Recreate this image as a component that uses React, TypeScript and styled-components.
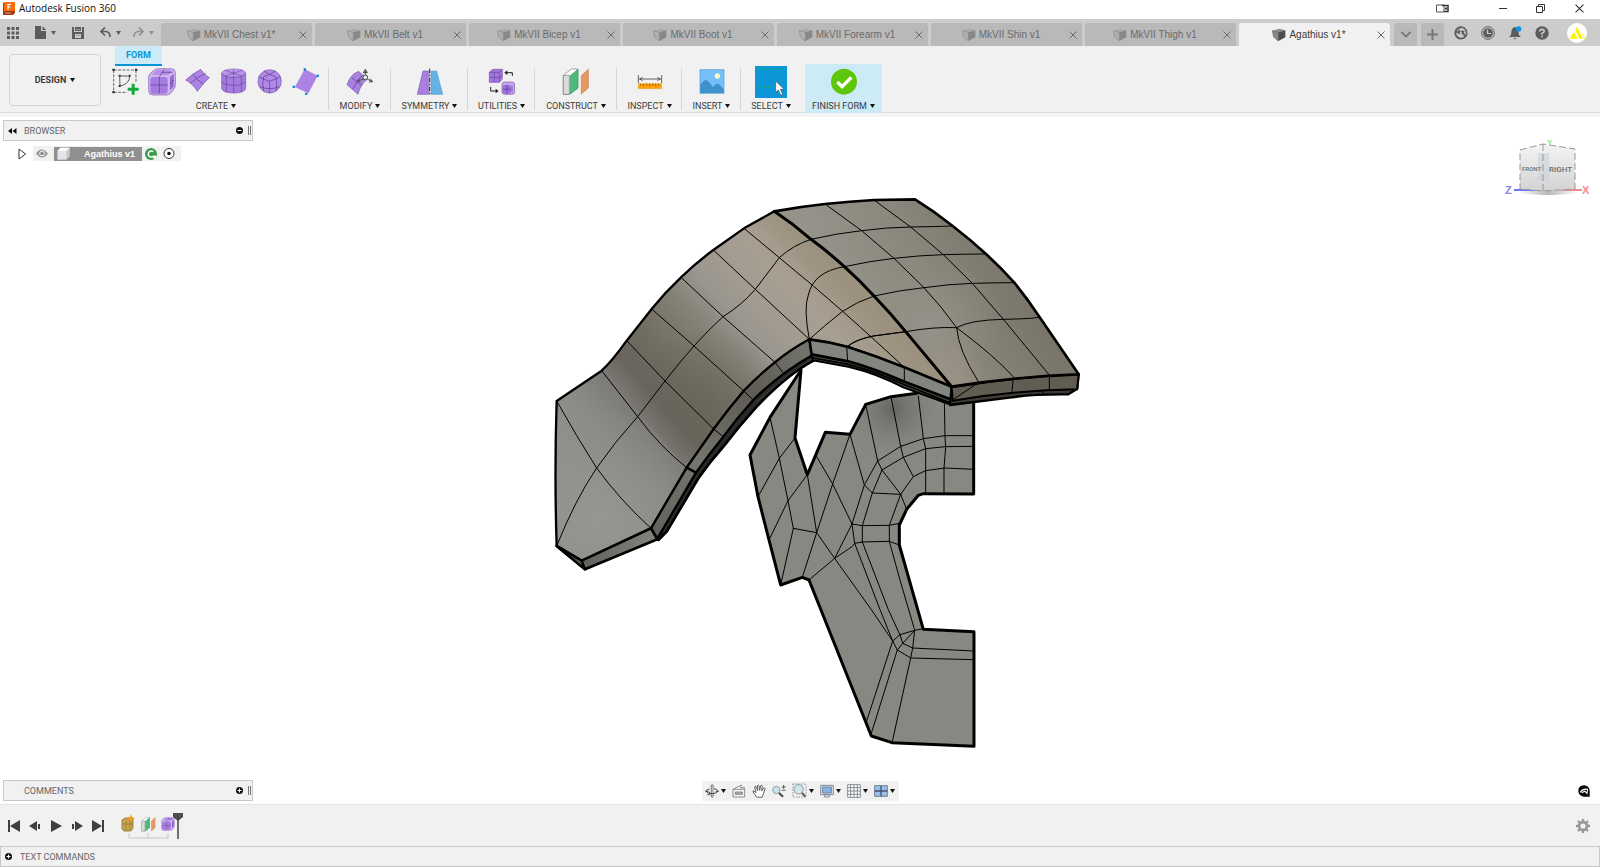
import React from "react";
import styled, { createGlobalStyle } from "styled-components";

const sans = `"Liberation Sans", Arial, sans-serif`;
const label = `Roboto, "Liberation Sans", sans-serif`;

const GlobalStyle = createGlobalStyle`
  * { box-sizing: border-box; }
  body { margin: 0; font-family: ${label}; font-size: 9px; color: #3c3c3c; background: #fff; }
  button { font: inherit; color: inherit; background: none; border: 0; padding: 0; margin: 0; display: inline-flex; align-items: center; justify-content: center; cursor: pointer; }
  svg { display: block; flex: none; }
`;

const Page = styled.div`
  min-height: 100vh;
  display: flex;
  flex-direction: column;
`;

/* ---------- title bar ---------- */
const TitleBar = styled.header`
  height: 19px;
  display: flex;
  align-items: center;
  padding: 0 16px 2px 3px;
  gap: 4px;
  background: #fff;
`;
const AppTitle = styled.h1`
  margin: 0;
  flex: 1;
  font: 400 10px "Open Sans", "Noto Sans", sans-serif;
  line-height: 17px;
  color: #111;
`;
const WindowButton = styled.button<{ $after: number }>`
  height: 16px;
  margin-right: ${(p) => p.$after}px;
`;

/* ---------- document tabs ---------- */
const TabStrip = styled.div`
  height: 27px;
  display: flex;
  align-items: stretch;
  background: #ccc;
  color: #666;
`;
const QuickBar = styled.div`
  width: 161px;
  padding-left: 7px;
  display: flex;
  align-items: center;
`;
const QuickButton = styled.button<{ $after: number; $dim?: boolean }>`
  gap: 5px;
  height: 20px;
  margin-right: ${(p) => p.$after}px;
  color: ${(p) => (p.$dim ? "#929292" : "#5c5c5c")};
`;
const Tabs = styled.nav`
  flex: 1;
  min-width: 0;
  display: flex;
  gap: 3px;
  padding-top: 4px;
`;
const Tab = styled.div<{ $active?: boolean }>`
  flex: 1;
  min-width: 0;
  display: flex;
  align-items: center;
  padding-right: 3px;
  border-radius: 3px 3px 0 0;
  background: ${(p) => (p.$active ? "#f1f1f1" : "#b9b9b9")};
  color: ${(p) => (p.$active ? "#3c3c3c" : "#6a6a6a")};
`;
const TabName = styled.button`
  flex: 1;
  min-width: 0;
  gap: 3px;
  padding-left: 4px;
  height: 22px;
  font-family: ${sans};
  font-size: 10px;
  line-height: 22px;
  white-space: nowrap;
`;
const SmallButton = styled.button`
  width: 12px;
  height: 16px;
`;
const StripButton = styled.button`
  width: 23px;
  margin: 4px 0 0 4px;
  border-radius: 3px 3px 0 0;
  background: #b9b9b9;
  color: #777;
`;
const Account = styled.div`
  width: 156px;
  padding-left: 11px;
  display: flex;
  align-items: center;
  gap: 15px;
  color: #5c5c5c;
`;
const Avatar = styled.button`
  width: 20px;
  height: 20px;
  margin-left: 4px;
  border-radius: 50%;
  background: #fff;
`;

/* ---------- ribbon ---------- */
const Ribbon = styled.section`
  height: 71px;
  display: flex;
  align-items: flex-start;
  background: #f1f1f1;
  border-bottom: 4px solid #f4f4f4;
  box-shadow: inset 0 -1px 0 #dcdcdc;
`;
const Workspace = styled.button`
  width: 92px;
  height: 52px;
  margin: 8px 2px 0 9px;
  gap: 4px;
  border: 1px solid #d4d4d4;
  border-radius: 4px;
  font-weight: 700;
`;
const RibbonBody = styled.div`
  display: flex;
  flex-direction: column;
`;
const RibbonTabs = styled.div`
  height: 18px;
  padding-left: 12px;
`;
const RibbonTab = styled.button`
  width: 47px;
  height: 20px;
  border-bottom: 2px solid #0696d7;
  background: #cdeaf7;
  color: #0696d7;
  font-weight: 700;
`;
const Groups = styled.div`
  display: flex;
`;
const Group = styled.div<{ $width: number; $plain?: boolean; $lit?: boolean }>`
  width: ${(p) => p.$width}px;
  height: 49px;
  margin-left: ${(p) => (p.$lit ? 4 : 0)}px;
  display: flex;
  flex-direction: column;
  background: ${(p) =>
    p.$lit
      ? "#cdeaf7"
      : p.$plain
        ? "none"
        : "linear-gradient(#d6d6d6, #d6d6d6) right 4px / 1px 42px no-repeat"};
`;
const Tools = styled.div`
  height: 34px;
  display: flex;
  align-items: center;
  justify-content: center;
  gap: 8px;
  padding-top: 1px;
`;
const Tool = styled.button<{ $on?: boolean }>`
  width: ${(p) => (p.$on ? 32 : 28)}px;
  height: ${(p) => (p.$on ? 32 : 28)}px;
  background: ${(p) => (p.$on ? "#0a96d8" : "none")};
`;
const GroupName = styled.button`
  height: 15px;
  gap: 3px;
  white-space: nowrap;
`;

/* ---------- canvas ---------- */
const Canvas = styled.main`
  position: relative;
  flex: 1;
  min-height: 480px;
  display: flex;
  flex-direction: column;
  justify-content: space-between;
  background: #fff;
`;
const Scene = styled.svg`
  position: absolute;
  inset: 0;
  width: 100%;
  height: 100%;
`;
const CanvasTop = styled.div`
  position: relative;
  display: flex;
  justify-content: space-between;
  padding: 3px 9px 0 3px;
`;
const CanvasBottom = styled.div`
  position: relative;
  display: grid;
  grid-template-columns: 1fr auto 1fr;
  align-items: center;
  padding: 0 3px 3px;
`;
const CubeHolder = styled.div`
  padding-top: 18px;
`;
const PanelBar = styled.div`
  width: 250px;
  height: 21px;
  display: flex;
  align-items: center;
  padding: 0 1px 0 4px;
  border: 1px solid #c8c8c8;
  background: #f1f1f1;
  color: #666;
`;
const PanelLead = styled.span`
  width: 16px;
  display: flex;
`;
const PanelTitle = styled.h2`
  flex: 1;
  margin: 0;
  font-size: 9px;
  font-weight: 400;
`;
const Grip = styled.span`
  width: 3px;
  height: 9px;
  margin-left: 5px;
  border: solid #777;
  border-width: 0 1px;
`;
const Tree = styled.div`
  display: flex;
  align-items: center;
  margin: 5px 0 0 15px;
  height: 15px;
`;
const TreeItem = styled.div`
  display: flex;
  align-items: center;
  height: 15px;
  margin-left: 6px;
  padding: 0 6px 0 3px;
  background: #f1f1f1;
`;
const TreeName = styled.button`
  width: 88px;
  height: 14px;
  margin: 0 3px 0 6px;
  padding: 0 7px 0 3px;
  justify-content: space-between;
  background: #909090;
  color: #fff;
  font: 700 9px ${sans};
`;
const NavBar = styled.div`
  width: 197px;
  height: 20px;
  display: flex;
  align-items: center;
  justify-content: space-between;
  padding: 0 4px 0 3px;
  background: #f1f1f1;
`;
const NavButton = styled.button`
  gap: 2px;
  height: 18px;
`;
const Badge = styled.button`
  justify-self: end;
  margin-right: 7px;
`;

/* ---------- timeline and command line ---------- */
const Timeline = styled.footer`
  height: 42px;
  display: flex;
  align-items: center;
  padding: 0 10px 0 8px;
  background: #f1f1f1;
  border-top: 1px solid #e6e6e6;
`;
const Playback = styled.div`
  display: flex;
  gap: 7px;
  width: 112px;
  color: #3f3f3f;
`;
const Features = styled.div`
  flex: 1;
`;
const CommandBar = styled.section`
  height: 21px;
  display: flex;
  align-items: center;
  gap: 8px;
  padding-left: 4px;
  border: 1px solid #c8c8c8;
  background: #f1f1f1;
  color: #666;
`;

/* ---------- icons ---------- */
const Caret = ({ fill = "currentColor" }: { fill?: string }) => (
  <svg width="5" height="4" viewBox="0 0 5 4"><path d="M0 0h5L2.500 4z" fill={fill} /></svg>
);
const Cross = ({ size = 8, color = "#6a6a6a" }) => (
  <svg width={size} height={size} viewBox="0 0 8 8"><path d="M.5.5l7 7M7.500 .5l-7 7" stroke={color} fill="none" /></svg>
);
const DocCube = ({ active }: { active?: boolean }) => (
  <svg width="14" height="14" viewBox="0 0 42 42">
    <path d="M1 8L22 2 40 7 19 13z" fill={active ? "#8c8c8c" : "#aaa"} />
    <path d="M1 8l18 5v26L5 27z" fill={active ? "#8a8a8a" : "#b0b0b0"} stroke={active ? "#666" : "#8b8b8b"} strokeWidth="2" />
    <path d="M19 13L40 7v21L19 39z" fill={active ? "#4d4d4d" : "#888"} />
  </svg>
);
const Plus = () => (
  <svg width="7" height="7" viewBox="0 0 7 7"><circle cx="3.500" cy="3.500" r="3.500" fill="#111" /><path d="M1.500 3.500h4M3.500 1.500v4" stroke="#fff" /></svg>
);

const SketchIcon = () => (
  <svg width="28" height="28" viewBox="0 0 84 84">
    <path d="M5 6H72M5 6V73M5 73H45M72 6V44" stroke="#4a4a4a" strokeWidth="2.500" strokeDasharray="9 4" fill="none" />
    <g fill="#333"><path d="M1 2h7v7H1zM69 2h7v7h-7zM1 69h7v7H1z" /><path d="M20 20h6v6h-6zM50 20h6v6h-6zM20 51h6v6h-6z" /></g>
    <path d="M23 24H53Q53 48 24 54Z" stroke="#444" strokeWidth="2.500" fill="none" />
    <path d="M59 47h9v12h12v9H68v12h-9V68H47v-9h12z" fill="#14a83c" />
  </svg>
);
const BoxIcon = ({ size = 28 }: { size?: number }) => (
  <svg width={size} height={size} viewBox="0 0 84 84">
    <path d="M2 25Q3 18 20 5Q24 2 32 2H70Q82 3 82 14V52Q82 58 72 72Q64 81 56 81H14Q2 80 2 68Z" fill="#cfb4f2" stroke="#7b57ac" strokeWidth="2" />
    <path d="M13 18L26 6H66L74 12 60 21H20Z" fill="#b48ee8" />
    <rect x="7" y="27" width="52" height="50" rx="9" fill="#a67be0" />
    <path d="M66 28L77 17V55L66 68Z" fill="#9468d2" />
    <path d="M34 27V77M7 51H59M34 27L49 4M66 48L78 36M42 13H74" stroke="#593987" strokeWidth="2" fill="none" />
  </svg>
);
const FaceIcon = () => (
  <svg width="28" height="28" viewBox="0 0 84 84">
    <path d="M5 36Q28 15 50 4Q61 21 76 29Q58 45 40 70Q26 46 5 36Z" fill="#ac82e4" stroke="#7b57ac" strokeWidth="2" />
    <path d="M27 19Q42 40 58 48M18 46Q40 27 65 16" stroke="#593987" strokeWidth="2" fill="none" />
  </svg>
);
const CylinderIcon = () => (
  <svg width="28" height="28" viewBox="0 0 84 84">
    <path d="M5 15Q10 3 41 3T77 15V62Q72 75 41 75T5 62Z" fill="#a57bdf" stroke="#7b57ac" strokeWidth="2" />
    <path d="M5 15Q10 3 41 3T77 15Q71 28 41 28T5 15Z" fill="#b996eb" />
    <path d="M5 15Q11 28 41 28T77 15M5 40Q11 52 41 52T77 40M41 28V75M19 26V72M64 26V72M14 7L67 24M67 7L15 24M41 3V28" stroke="#593987" strokeWidth="1.500" fill="none" />
  </svg>
);
const SphereIcon = () => (
  <svg width="28" height="28" viewBox="0 0 84 84">
    <circle cx="41" cy="40" r="35" fill="#b188e8" stroke="#7b57ac" strokeWidth="2" />
    <path d="M8 26Q22 34 40 40Q58 34 74 26M40 40Q42 58 41 76M12 56Q25 62 41 62T71 56M24 9Q34 18 60 27Q64 45 60 70M59 9Q46 18 22 27Q18 50 24 71" stroke="#593987" strokeWidth="2" fill="none" />
  </svg>
);
const PlaneIcon = () => (
  <svg width="28" height="28" viewBox="0 0 84 84">
    <path d="M38 4L77 23 49 76 9 57Z" fill="#ac82e4" stroke="#a5a5a5" strokeWidth="1" strokeDasharray="4 4" />
    <g fill="#1483e0"><path d="M35 1h7v7h-7zM74 20h7v7h-7zM2 53h7v7H2zM39 74h7v7h-7z" /></g>
  </svg>
);
const ModifyIcon = () => (
  <svg width="28" height="28" viewBox="0 0 84 84">
    <path d="M3 50Q14 18 38 10L64 34Q44 48 36 79Z" fill="#a981e1" stroke="#7b57ac" strokeWidth="2" />
    <path d="M18 30L48 53M21 63Q31 37 50 21" stroke="#593987" strokeWidth="2" fill="none" />
    <path d="M58 8V26M52 14L58 4 64 14ZM52 34L37 38M42 32L34 40 44 42M65 34L78 40M72 32L80 41 69 42" stroke="#444" strokeWidth="3" fill="#eee" />
    <circle cx="58" cy="28" r="7" fill="#f1f1f1" stroke="#444" strokeWidth="3" />
  </svg>
);
const SymmetryIcon = () => (
  <svg width="28" height="28" viewBox="0 0 84 84">
    <path d="M21 9H37V79H4Z" fill="#ac7de2" stroke="#7e5ab0" strokeWidth="2" />
    <path d="M45 9H62L80 79H45Z" fill="#65b3e5" stroke="#559fd2" strokeWidth="2" />
    <path d="M41 2V83" stroke="#222" strokeWidth="3" strokeDasharray="14 4 5 4" />
  </svg>
);
const UtilitiesIcon = () => (
  <svg width="28" height="28" viewBox="0 0 84 84">
    <path d="M4 13L14 4H43V33L34 43H4Z" fill="#a175dd" stroke="#7b57ac" strokeWidth="2" />
    <path d="M4 13H34V43M34 13L43 4M19 13V43M4 28H34L43 20" stroke="#593987" strokeWidth="1.500" fill="none" />
    <rect x="42" y="42" width="38" height="37" rx="8" fill="#c7a9f1" stroke="#7b57ac" strokeWidth="2" />
    <rect x="44" y="51" width="25" height="26" rx="6" fill="#9d70db" />
    <path d="M57 51V77M44 64H69M72 52V73" stroke="#593987" strokeWidth="2" />
    <path d="M73 24V14H56M8 57V69H25" stroke="#222" strokeWidth="3" fill="none" />
    <path d="M58 7V21L49 14ZM23 62V76L32 69Z" fill="#222" />
  </svg>
);
const ConstructIcon = ({ size = 28 }: { size?: number }) => (
  <svg width={size} height={size} viewBox="0 0 84 84">
    <path d="M4 22L28 3H47V60L21 79H4Z" fill="#fff" stroke="#777" strokeWidth="2" />
    <path d="M4 22H22V79H4Z" fill="#dcdcdc" stroke="#777" strokeWidth="2" />
    <path d="M25 23L48 4V60L25 78Z" fill="#4cba78" stroke="#31945a" strokeWidth="2" />
    <path d="M58 23L79 4V60L58 78Z" fill="#e59a63" stroke="#c67c44" strokeWidth="2" />
  </svg>
);
const InspectIcon = () => (
  <svg width="28" height="28" viewBox="0 0 84 84">
    <path d="M7 21V45M77 21V45M10 33H74M20 28L11 33 20 38M64 28L73 33 64 38" stroke="#444" strokeWidth="2.500" fill="none" />
    <path d="M7 47H77V62H7Z" fill="#ffa20d" stroke="#d98200" strokeWidth="1" />
    <path d="M14 47v6M23 47v8M32 47v6M41 47v8M50 47v6M59 47v8M68 47v6" stroke="#6f4400" strokeWidth="2" />
  </svg>
);
const InsertIcon = () => (
  <svg width="28" height="28" viewBox="0 0 84 84">
    <path d="M6 5H78V76H6Z" fill="#74bff8" stroke="#4b98cf" strokeWidth="2" />
    <path d="M7 50Q18 34 26 36Q38 44 44 58Q54 44 62 48Q72 58 77 64V75H7Z" fill="#3d92cb" />
    <circle cx="58" cy="24" r="8" fill="#fbf8cf" />
  </svg>
);
const SelectIcon = () => (
  <svg width="32" height="32" viewBox="0 0 96 96">
    <path d="M8 9H79V62H8Z" fill="none" stroke="#1fae66" strokeWidth="2.500" strokeDasharray="8 4" />
    <path d="M62 45V79L70 72 77 88 83 85 76 70H87Z" fill="#fff" stroke="#555" strokeWidth="2" />
  </svg>
);
const FinishIcon = () => (
  <svg width="28" height="28" viewBox="0 0 84 84">
    <circle cx="42" cy="41" r="39" fill="#5fc70a" />
    <path d="M22 42L36 56 64 28" stroke="#fff" strokeWidth="10" fill="none" />
  </svg>
);

const QuickGrid = () => (
  <svg width="12" height="12" viewBox="0 0 12 12">
    {[0, 4.5, 9].map((y) => [0, 4.5, 9].map((x) => <rect key={`${x}-${y}`} x={x} y={y} width="3" height="3" fill="currentColor" />))}
  </svg>
);
const QuickFile = () => (
  <svg width="11" height="13" viewBox="0 0 11 13"><path d="M0 0h6v5h5v8H0zM7.500 0L11 4H7.500z" fill="currentColor" /></svg>
);
const QuickSave = () => (
  <svg width="12" height="12" viewBox="0 0 12 12"><path d="M0 0h2v5h8V0h2v12H0zM3 0h6v4H3zM3 7v4h6V7z" fill="currentColor" fillRule="evenodd" /><path d="M4 8h4v1H4zM4 2.500h4" fill="currentColor" stroke="#ccc" strokeWidth=".6" /></svg>
);
const QuickUndo = ({ redo }: { redo?: boolean }) => (
  <svg width="11" height="11" viewBox="0 0 11 11">
    <g transform={redo ? "translate(11 0) scale(-1 1)" : undefined}>
      <path d="M5 .5L1 4.500 5 8.500M1 4.500h4.500Q10 4.500 10 10" fill="none" stroke="currentColor" strokeWidth="1.700" />
    </g>
  </svg>
);

/* ---------- 3D model ---------- */
const Model = () => (
  <Scene viewBox="0 117 1600 687" preserveAspectRatio="xMidYMid meet" role="img" aria-label="Helmet half with cheek guard">
    <defs>
      <linearGradient id="dome" gradientUnits="userSpaceOnUse" x1="-2" y1="754" x2="748" y2="94">
        <stop offset="0" stopColor="#94938f" />
        <stop offset=".17" stopColor="#8b8a87" />
        <stop offset=".27" stopColor="#7e7c78" />
        <stop offset=".35" stopColor="#69655d" />
        <stop offset=".43" stopColor="#6e6a5f" />
        <stop offset=".53" stopColor="#7b776b" />
        <stop offset=".61" stopColor="#88847a" />
        <stop offset=".68" stopColor="#99958e" />
        <stop offset=".76" stopColor="#a19b90" />
        <stop offset=".88" stopColor="#a89f92" />
        <stop offset="1" stopColor="#9f9583" />
      </linearGradient>
      <linearGradient id="seamTone" gradientUnits="userSpaceOnUse" x1="840" y1="310" x2="910" y2="245">
        <stop offset="0" stopColor="#9a907d" stopOpacity="0" />
        <stop offset="1" stopColor="#9a907d" stopOpacity=".9" />
      </linearGradient>
      <radialGradient id="frontTone" gradientUnits="userSpaceOnUse" cx="170" cy="980" r="330">
        <stop offset="0" stopColor="#979692" />
        <stop offset="1" stopColor="#8c8b88" stopOpacity="0" />
      </radialGradient>
      <radialGradient id="domeShade" gradientUnits="userSpaceOnUse" cx="500" cy="650" r="240">
        <stop offset="0" stopColor="#666155" stopOpacity=".6" />
        <stop offset="1" stopColor="#66625a" stopOpacity="0" />
      </radialGradient>
      <linearGradient id="crown" gradientUnits="userSpaceOnUse" x1="260" y1="440" x2="700" y2="230">
        <stop offset="0" stopColor="#96938a" />
        <stop offset=".5" stopColor="#8b877d" />
        <stop offset="1" stopColor="#7b766a" />
      </linearGradient>
      <radialGradient id="crownLight" gradientUnits="userSpaceOnUse" cx="480" cy="430" r="220">
        <stop offset="0" stopColor="#97958c" stopOpacity=".8" />
        <stop offset="1" stopColor="#8f8b80" stopOpacity="0" />
      </radialGradient>
      <radialGradient id="crownCorner" gradientUnits="userSpaceOnUse" cx="520" cy="590" r="130">
        <stop offset="0" stopColor="#a0968a" stopOpacity=".8" />
        <stop offset="1" stopColor="#a0968a" stopOpacity="0" />
      </radialGradient>
      <linearGradient id="rim" gradientUnits="userSpaceOnUse" x1="350" y1="1040" x2="810" y2="480">
        <stop offset="0" stopColor="#62625c" />
        <stop offset=".35" stopColor="#74756e" />
        <stop offset=".7" stopColor="#5d5b54" />
        <stop offset="1" stopColor="#73736b" />
      </linearGradient>
      <linearGradient id="toeRim" x1="0" x2="1"><stop stopColor="#56554f" /><stop offset="1" stopColor="#84847e" /></linearGradient>
      <radialGradient id="cheekShade" gradientUnits="userSpaceOnUse" cx="490" cy="175" r="150">
        <stop offset="0" stopColor="#636562" />
        <stop offset="1" stopColor="#82857c" stopOpacity="0" />
      </radialGradient>
    </defs>
    <g transform="translate(540 190) scale(.33333)" fill="none" stroke="#000" strokeWidth="3" strokeLinejoin="round" strokeLinecap="round">
      {/* cheek guard */}
      <g transform="translate(570 480)">
        <path d="M213 60L195 264 232 374 286 247 360 253 407 163 483 140 560 130 731 140V432L580 431 565 436 530 478 508 525V585L580 838 732 845V1189L486 1178 424 1158 237 690 217 682 152 705 117 570 84 440 60 315 120 202Z" fill="#868981" stroke="none" />
        <path d="M360 253L407 163 483 140 560 130 731 140V300H420Z" fill="url(#cheekShade)" stroke="none" />
        <path d="M560 130L483 140 407 163 360 253 286 247 232 374 195 264 213 60 120 202 60 315 84 440 117 570 152 705 217 682 237 690 424 1158 486 1178 732 1189V845L580 838 508 585V525L530 478 565 436 580 431 731 432V150" strokeWidth="9" />
        <path d="M120 202L148 325 174 452 190 535 152 705M195 264L148 325 84 440M232 374L174 452 117 570M232 374L260 548 217 682M190 535L260 548 314 625 424 779 488 873M360 253L308 402 260 548M259 318L308 402 366 522 374 580M237 690L314 625 366 590 374 580 397 576 478 574 508 585M314 625L366 522 403 405 443 333 512 289 580 266 645 257H731M360 253L403 405 427 429 512 433M407 163L443 333 456 360 512 433M483 140L512 289 520 322 550 380 586 362 645 354 731 358M565 138L580 266 587 296V431M643 150L645 257 647 292 642 354V430M731 289L647 290 587 296 520 322 456 360 427 429 397 527M366 522L397 527 478 526 508 520M397 527V576M478 526V574L510 690 554 840M512 433L478 526M512 433L550 380M512 433L530 478M374 580L450 779 488 873M397 576L475 779 510 855" />
      </g>
      <g transform="translate(750 1110)">
        <path d="M308 243L330 224 374 211 400 206M308 243L322 270 362 294 550 299M330 224L338 250 368 264 550 273M322 270L338 250 374 211M308 243L230 483M322 270L244 520M374 211L368 264 362 294 307 545" />
      </g>

      {/* front flap and side of the dome */}
      <path d="M50 633L185 542Q215 515 260 452L335 357Q375 307 423 262Q470 217 520 180L612 115 703 64Q760 102 813 148L913 230 1002 318 1097 425 1235 590 1093 532 922 470 808 448 705 517Q650 555 611 603L521 717 440 833 333 1015 125 1112 50 1068Q43 850 50 633Z" fill="url(#dome)" stroke="none" />
      <path d="M50 633L185 542 440 833 333 1015 125 1112 50 1068Z" fill="url(#frontTone)" stroke="none" />
      <path d="M185 542L423 262 705 517 611 603 440 833Z" fill="url(#domeShade)" stroke="none" />
      <path d="M703 64L813 148 913 230 1002 318 1097 425 1235 590 1093 532 903 365 818 286 718 203 612 115Z" fill="url(#seamTone)" stroke="none" />
      <path d="M50 633Q110 740 170 834Q240 930 333 1015M185 542L293 680Q360 770 440 833M260 452L375 573 521 717M335 357L462 468 611 603M423 262L549 380 705 517M520 180L646 298 808 448M612 115L718 203 820 288 908 364Q1010 455 1093 532" />
      <path d="M50 1068Q105 930 170 834Q225 755 293 680L375 573Q418 518 462 468Q505 420 549 380Q605 345 646 298L718 203Q760 165 813 148M808 448Q790 355 805 315Q820 245 913 230M808 448Q855 405 908 364Q950 335 1002 318M922 470Q940 450 1000 438L1097 425" />
      {/* rims */}
      <path d="M808 448Q750 480 705 517Q655 557 611 603Q565 657 521 717L440 833 333 1015 355 1050 380 1025 475 865Q510 815 550 770 600 705 650 650 740 555 820 512Z" fill="#2a2a28" strokeWidth="6" />
      <path d="M808 448Q750 480 705 517Q655 557 611 603Q565 657 521 717L440 833 333 1015 352 1046 468 848Q505 795 550 740 590 685 640 630 720 550 818 495Z" fill="url(#rim)" strokeWidth="7" />
      <path d="M440 833L468 848" strokeWidth="8" />
      <path d="M521 717L550 740M611 603L640 630M705 517L732 552" />
      <path d="M650 636Q740 555 818 506" stroke="#55534d" strokeWidth="2" />
      <path d="M50 1068L125 1112 333 1015 352 1048 135 1138Z" fill="url(#toeRim)" strokeWidth="8" />
      <path d="M50 1068L125 1112 135 1138Z" fill="#5b5a53" strokeWidth="7" />
      <path d="M50 633L185 542Q215 515 260 452L335 357Q375 307 423 262Q470 217 520 180L612 115 703 64M50 633Q43 850 50 1068" strokeWidth="7" />
      <path d="M355 1050L380 1025 475 865Q510 815 550 770 600 705 650 650 740 555 820 512" strokeWidth="8" />

      {/* crown */}
      <g transform="translate(690 -30)">
        <path d="M118 478Q175 485 232 500Q320 528 403 562L545 620V675L400 622Q320 580 235 560L128 541Z" fill="#4b4b46" strokeWidth="6" />
        <path d="M118 478Q175 485 232 500Q320 528 403 562L545 620 547 660 400 604Q310 565 235 544L125 523Z" fill="#83867f" strokeWidth="8" />
        <path d="M130 534L235 553Q320 575 400 613L540 668" strokeWidth="5" />
        <path d="M230 500L233 544M403 562V606" />
        <path d="M545 620L926 583 922 626 895 643Q790 642 725 652L540 675Z" fill="#3f3c35" strokeWidth="7" />
        <path d="M545 622Q735 590 926 583L921 628Q735 630 548 662Z" fill="#625d53" strokeWidth="6" />
        <path d="M548 660L625 608M730 593L726 634M838 585V628M820 632V643" />
        <path d="M13 94Q90 80 165 72T312 60L435 58Q495 95 548 138Q600 178 648 222Q692 262 733 308Q775 360 808 410L926 583Q735 590 545 620L407 455 312 348 223 260 123 178Z" fill="url(#crown)" stroke="none" />
        <path d="M223 260L520 200 730 400 730 592 545 620 312 348Z" fill="url(#crownLight)" stroke="none" />
        <path d="M407 455L560 443 660 600 545 620Z" fill="url(#crownCorner)" stroke="none" />
        <path d="M13 94Q90 80 165 72T312 60L435 58Q495 95 548 138Q600 178 648 222Q692 262 733 308Q775 360 808 410L926 583Q735 590 545 620" strokeWidth="8" />
        <path d="M13 94Q70 132 123 178Q175 216 223 260Q270 302 312 348Q362 400 407 455L545 620" strokeWidth="9" />
        <path d="M165 72L275 152 372 235 462 323Q515 380 560 443Q565 510 625 605M312 60L422 141 520 224 607 310 700 418 838 585M560 443Q670 525 732 592M123 178Q200 160 275 152Q350 142 422 141T548 138M223 260Q300 243 372 235Q450 226 520 224T648 222M312 348Q390 330 462 323Q540 312 607 310T733 308M407 455Q490 440 560 443Q600 420 700 418T808 411M232 500Q260 478 310 468L407 455" />
      </g>
    </g>
  </Scene>
);

const ViewCube = () => (
  <svg width="86" height="60" viewBox="0 0 86 60" fontFamily={sans}>
    <defs>
      <linearGradient id="cubeFace" x2="0" y2="1"><stop stopColor="#f4f4f4" /><stop offset="1" stopColor="#d3d3d3" /></linearGradient>
      <linearGradient id="floor"><stop stopColor="#999" stopOpacity=".1" /><stop offset=".5" stopColor="#888" /><stop offset="1" stopColor="#999" stopOpacity=".1" /></linearGradient>
    </defs>
    <ellipse cx="43" cy="54" rx="29" ry="3" fill="url(#floor)" opacity=".6" />
    <path d="M9 52H30" stroke="#6f73ee" strokeWidth="2" />
    <path d="M56 52H77" stroke="#f08a8a" strokeWidth="2" />
    <path d="M15 12L38 6V53L15 51ZM38 6L70 11V51L38 53Z" fill="url(#cubeFace)" />
    <path d="M33 15H44V43H33Z" fill="#cbd0d8" opacity=".6" />
    <path d="M15 12L38 6 70 11V51L38 53 15 51ZM38 6V53" fill="none" stroke="#999" strokeDasharray="7 3" />
    <g fill="#6c6c6c" fontFamily={label} fontWeight="500">
      <text x="17" y="33" fontSize="6">FRONT</text>
      <text x="44" y="34" fontSize="8">RIGHT</text>
    </g>
    <g fontWeight="700">
      <text x="42" y="7" fontSize="8" fill="#7df57d">Y</text>
      <text x="0" y="56" fontSize="11" fill="#8387f0">Z</text>
      <text x="77" y="56" fontSize="11" fill="#f28a8a">X</text>
    </g>
  </svg>
);

const docs = ["MkVII Chest v1*", "MkVII Belt v1", "MkVII Bicep v1", "MkVII Boot v1", "MkVII Forearm v1", "MkVII Shin v1", "MkVII Thigh v1", "Agathius v1*"];

type ToolDef = { name: string; icon: React.ReactNode };
type GroupDef = { name: string; width: number; tools: ToolDef[]; plain?: boolean; lit?: boolean; on?: boolean };
const groups: GroupDef[] = [
  {
    name: "CREATE", width: 226,
    tools: [
      { name: "Create sketch", icon: <SketchIcon /> },
      { name: "Box", icon: <BoxIcon /> },
      { name: "Face", icon: <FaceIcon /> },
      { name: "Cylinder", icon: <CylinderIcon /> },
      { name: "Sphere", icon: <SphereIcon /> },
      { name: "Plane", icon: <PlaneIcon /> },
    ],
  },
  { name: "MODIFY", width: 62, tools: [{ name: "Edit form", icon: <ModifyIcon /> }] },
  { name: "SYMMETRY", width: 77, tools: [{ name: "Mirror", icon: <SymmetryIcon /> }] },
  { name: "UTILITIES", width: 67, tools: [{ name: "Convert", icon: <UtilitiesIcon /> }] },
  { name: "CONSTRUCT", width: 82, tools: [{ name: "Offset plane", icon: <ConstructIcon /> }] },
  { name: "INSPECT", width: 65, tools: [{ name: "Measure", icon: <InspectIcon /> }] },
  { name: "INSERT", width: 59, tools: [{ name: "Insert canvas", icon: <InsertIcon /> }] },
  { name: "SELECT", width: 60, tools: [{ name: "Window selection", icon: <SelectIcon /> }], plain: true, on: true },
  { name: "FINISH FORM", width: 77, tools: [{ name: "Finish", icon: <FinishIcon /> }], lit: true },
];

const navTools: { name: string; menu?: boolean; icon: React.ReactNode }[] = [
  { name: "Orbit", menu: true, icon: <svg width="14" height="14" viewBox="0 0 42 42" fill="none" stroke="#444" strokeWidth="3"><path d="M19 6V36M24 6V36M17 8L21.500 1 26 8M17 34L21.500 41 26 34" strokeWidth="2" /><path d="M14 15Q1 18 3 22Q8 29 22 29Q38 28 39 21Q36 15 27 14M12 23L15 30 7 33M1 22H10M32 22H41" /></svg> },
  { name: "Look at", icon: <svg width="14" height="14" viewBox="0 0 42 42" fill="#f5f5f5" stroke="#777" strokeWidth="2.500"><path d="M3 16L28 3 26 12 37 10V16" /><path d="M3 16H38V39H3Z" /><path d="M10 24H31V31H10Z" fill="#a7b4c7" /></svg> },
  { name: "Pan", icon: <svg width="14" height="14" viewBox="0 0 42 42" fill="#fff" stroke="#444" strokeWidth="2.500" strokeLinejoin="round"><path d="M14 39L3 24Q2 19 6 21L12 26 8 9Q9 5 12 8L17 20 16 5Q18 1 21 5L23 19 26 5Q30 2 31 6L29 21 35 12Q39 11 39 15L33 33 30 40Z" /></svg> },
  { name: "Zoom", icon: <svg width="14" height="14" viewBox="0 0 42 42" fill="none" stroke="#444" strokeWidth="2.500"><circle cx="13" cy="18" r="11" fill="#c9e2ea" stroke="#7f929c" /><path d="M21 27L33 38" strokeWidth="6" /><path d="M35 3V15M29 9H41M29 19H41" /></svg> },
  { name: "Fit", menu: true, icon: <svg width="15" height="15" viewBox="0 0 45 45" fill="none" stroke="#555" strokeWidth="2"><path d="M3 3H42V42H3Z" strokeDasharray="4 4" /><circle cx="20" cy="19" r="14" fill="#cfe6e6" stroke="#789" strokeWidth="2.500" /><path d="M30 30L40 41" strokeWidth="6" /></svg> },
  { name: "Display settings", menu: true, icon: <svg width="14" height="14" viewBox="0 0 42 42" stroke="#6d7888" strokeWidth="2.500" fill="#dde3ea"><path d="M2 4H40V32H2Z" /><path d="M8 9H34V27H8Z" fill="#86b3ec" /><path d="M14 32H28V39H14Z" /></svg> },
  { name: "Grid and snaps", menu: true, icon: <svg width="14" height="14" viewBox="0 0 42 42" stroke="#717884" strokeWidth="2.500" fill="#fff"><path d="M2 2H40V40H2Z" /><path d="M11 2V40M21 2V40M31 2V40M2 11H40M2 21H40M2 31H40" /></svg> },
  { name: "Viewports", menu: true, icon: <svg width="14" height="12" viewBox="0 0 42 36" stroke="#5a6c86" strokeWidth="2.500" fill="#9bbfe8"><path d="M2 2H40V34H2Z" /><path d="M21 2V34M2 18H40" stroke="#42546e" strokeWidth="4" /></svg> },
];

const playback = [
  { name: "Go to start", d: "M0 0H2V12H0ZM12 0V12L2 6Z" },
  { name: "Step back", d: "M8 1V11L0 6ZM9 4H11V9H9Z" },
  { name: "Play", d: "M1 0L12 6 1 12Z" },
  { name: "Step forward", d: "M4 1V11L12 6ZM1 4H3V9H1Z" },
  { name: "Go to end", d: "M0 0L10 6 0 12ZM10 0H12V12H10Z" },
];

export default function App() {
  return (
    <Page>
      <GlobalStyle />
      <TitleBar>
        <svg width="12" height="14" viewBox="0 0 12 14">
          <path d="M0 1L2 0H12V11L10 13H0Z" fill="#a33a0b" />
          <path d="M1 0H12V9H1Z" fill="#fb6c0f" />
          <path d="M5 7.500V2.500H8M5 5H7.500" stroke="#fff" strokeWidth="1.200" fill="none" />
          <path d="M2 11h6" stroke="#d99" />
        </svg>
        <AppTitle>Autodesk Fusion 360</AppTitle>
        <WindowButton $after={46} aria-label="Switch display">
          <svg width="13" height="9" viewBox="0 0 13 9" fill="none" stroke="#334"><path d="M.5 1H8V8H.5Z" stroke="#555" /><path d="M6 1.500H12V7.500H8" strokeWidth="1.500" /><path d="M9 3.500h2v2H9z" fill="#334" stroke="none" /></svg>
        </WindowButton>
        <WindowButton $after={25} aria-label="Minimize"><svg width="8" height="9"><path d="M0 4.500H8" stroke="#333" /></svg></WindowButton>
        <WindowButton $after={26} aria-label="Restore"><svg width="9" height="9" viewBox="0 0 9 9" fill="none" stroke="#333"><path d="M.5 2.500h6v6h-6zM2.500 2.500v-2h6v6h-2" /></svg></WindowButton>
        <WindowButton $after={0} aria-label="Close"><Cross size={9} color="#333" /></WindowButton>
      </TitleBar>

      <TabStrip>
        <QuickBar>
          <QuickButton $after={16} aria-label="Data panel"><QuickGrid /></QuickButton>
          <QuickButton $after={16} aria-label="File"><QuickFile /><Caret /></QuickButton>
          <QuickButton $after={16} aria-label="Save"><QuickSave /></QuickButton>
          <QuickButton $after={12} aria-label="Undo"><QuickUndo /><Caret /></QuickButton>
          <QuickButton $after={0} $dim aria-label="Redo"><QuickUndo redo /><Caret /></QuickButton>
        </QuickBar>
        <Tabs>
          {docs.map((d, i) => {
            const active = i === docs.length - 1;
            return (
              <Tab key={d} $active={active}>
                <TabName><DocCube active={active} />{d}</TabName>
                <SmallButton aria-label={`Close ${d}`}><Cross /></SmallButton>
              </Tab>
            );
          })}
        </Tabs>
        <StripButton aria-label="All tabs"><svg width="10" height="7" viewBox="0 0 10 7"><path d="M.5 1L5 5.500 9.500 1" fill="none" stroke="currentColor" strokeWidth="1.800" /></svg></StripButton>
        <StripButton aria-label="New design"><svg width="11" height="11" viewBox="0 0 11 11"><path d="M5.500 0V11M0 5.500H11" stroke="currentColor" strokeWidth="2" /></svg></StripButton>
        <Account>
          <SmallButton aria-label="Extensions"><svg width="14" height="14" viewBox="0 0 14 14" fill="none" stroke="currentColor" strokeWidth="1.900"><path d="M8 1.300A5.700 5.700 0 1 0 12.700 7.500" /><path d="M1.500 5L5 7V3.500M8 1.300Q12.500 2 12.700 7.500M6.500 5.500h3L8.500 7.500q2.500 0 1.500 2.500" strokeWidth="1.600" /></svg></SmallButton>
          <SmallButton aria-label="Job status"><svg width="14" height="14" viewBox="0 0 14 14"><circle cx="7" cy="7" r="6.300" fill="none" stroke="currentColor" strokeWidth="1" /><circle cx="7" cy="7" r="4.800" fill="currentColor" /><path d="M6.500 3.500v4h3.500" stroke="#ccc" fill="none" strokeWidth="1.200" /></svg></SmallButton>
          <SmallButton aria-label="Notifications"><svg width="13" height="14" viewBox="0 0 13 14"><path d="M6 1Q9 1.500 9.300 5L10 9 12 11H0L2 9 2.500 5Q3 1.500 6 1ZM4.500 12h3L6 13.500z" fill="currentColor" /><circle cx="9.700" cy="3" r="2.700" fill="#0c96dc" /></svg></SmallButton>
          <SmallButton aria-label="Help"><svg width="14" height="14" viewBox="0 0 14 14"><circle cx="7" cy="7" r="6.700" fill="currentColor" /><path d="M4.800 5.500Q4.800 3.400 7 3.400T9.200 5.300Q9.200 6.500 7 7.300V8.800M7 9.800V11.300" fill="none" stroke="#ccc" strokeWidth="1.600" /></svg></SmallButton>
          <Avatar aria-label="Profile"><svg width="17" height="14" viewBox="0 0 51 42"><path d="M24 2L42 38H31L19 12ZM15 17L26 38H2ZM37 19L50 38H45Z" fill="#fff200" /></svg></Avatar>
        </Account>
      </TabStrip>

      <Ribbon>
        <Workspace>DESIGN <Caret fill="#111" /></Workspace>
        <RibbonBody>
          <RibbonTabs><RibbonTab>FORM</RibbonTab></RibbonTabs>
          <Groups>
            {groups.map((g) => (
              <Group key={g.name} $width={g.width} $plain={g.plain} $lit={g.lit}>
                <Tools>{g.tools.map((t) => <Tool key={t.name} $on={g.on} aria-label={t.name}>{t.icon}</Tool>)}</Tools>
                <GroupName>{g.name} <Caret fill="#111" /></GroupName>
              </Group>
            ))}
          </Groups>
        </RibbonBody>
      </Ribbon>

      <Canvas>
        <Model />
        <CanvasTop>
          <div>
            <PanelBar>
              <PanelLead>
                <button aria-label="Collapse browser"><svg width="9" height="6" viewBox="0 0 9 6"><path d="M4 0V6L0 3ZM8.500 0V6L4.500 3Z" fill="#111" /></svg></button>
              </PanelLead>
              <PanelTitle>BROWSER</PanelTitle>
              <button aria-label="Hide browser"><svg width="7" height="7" viewBox="0 0 7 7"><circle cx="3.500" cy="3.500" r="3.500" fill="#111" /><path d="M1.500 3.500h4" stroke="#fff" /></svg></button>
              <Grip />
            </PanelBar>
            <Tree>
              <button aria-label="Expand Agathius v1"><svg width="9" height="12" viewBox="0 0 9 12"><path d="M1 1L7.500 6 1 11Z" fill="#fff" stroke="#333" /></svg></button>
              <TreeItem>
                <button aria-label="Toggle visibility"><svg width="12" height="9" viewBox="0 0 12 9"><path d="M0 4.500Q3 0 6 .5T12 4.500Q9 8.500 6 8.500T0 4.500Z" fill="#989898" /><circle cx="6" cy="4.500" r="2.700" fill="#f1f1f1" /><circle cx="6" cy="4.500" r="1.800" fill="#888" /></svg></button>
                <TreeName>
                  <svg width="13" height="13" viewBox="0 0 39 39"><path d="M2 11L10 2H37V28L28 37H2Z" fill="#fff" stroke="#ddd" /><path d="M3 12H28V37H3Z" fill="#e4e4ea" /><path d="M28 12L37 3V28L28 37Z" fill="#c6c6cc" /></svg>
                  Agathius v1
                </TreeName>
                <svg width="12" height="12" viewBox="0 0 12 12"><circle cx="6" cy="6" r="6" fill="#3a9b47" /><path d="M8.300 3.800A3 3 0 1 0 8.500 8" fill="none" stroke="#fff" strokeWidth="1.500" /><circle cx="9.500" cy="9" r="1.800" fill="#fff" /></svg>
                <button aria-label="Activate component"><svg width="18" height="11" viewBox="0 0 18 11"><circle cx="12" cy="5.500" r="5" fill="#fff" stroke="#333" /><circle cx="12" cy="5.500" r="1.800" fill="#111" /></svg></button>
              </TreeItem>
            </Tree>
          </div>
          <CubeHolder><ViewCube /></CubeHolder>
        </CanvasTop>
        <CanvasBottom>
          <PanelBar>
            <PanelLead />
            <PanelTitle>COMMENTS</PanelTitle>
            <button aria-label="Show comments"><Plus /></button>
            <Grip />
          </PanelBar>
          <NavBar>
            {navTools.map((t) => (
              <NavButton key={t.name} aria-label={t.name}>{t.icon}{t.menu && <Caret fill="#111" />}</NavButton>
            ))}
          </NavBar>
          <Badge aria-label="Feedback"><svg width="12" height="12" viewBox="0 0 39 39"><path d="M19 1Q38 3 38 20V38H19Q1 36 1 19T19 1Z" fill="#0a0a0a" /><path d="M7 24Q16 11 31 14L29 27 22 20 12 25" fill="none" stroke="#fff" strokeWidth="3.500" /></svg></Badge>
        </CanvasBottom>
      </Canvas>

      <Timeline>
        <Playback>
          {playback.map((p) => (
            <button key={p.name} aria-label={p.name}><svg width="14" height="12" viewBox="0 0 14 12"><path d={p.d} fill="currentColor" /></svg></button>
          ))}
        </Playback>
        <Features>
          <svg width="66" height="28" viewBox="0 0 66 28">
            <path d="M9 21V26H48V21M28 21V26" fill="none" stroke="#c6c6c6" />
            <path d="M2 8L5 6H13V16L11 19H4L2 17Z" fill="#c6a550" stroke="#8a6e28" strokeWidth=".8" />
            <path d="M2 12H13M6 8V18M10 8V18" stroke="#8a6e28" strokeWidth=".6" />
            <path d="M11 2L12 5 15 6 12 7 11 10 10 7 7 6 10 5Z" fill="#ff9c12" />
            <g transform="translate(21 5)"><ConstructIcon size={15} /></g>
            <g transform="translate(41 5)"><BoxIcon size={14} /></g>
            <path d="M53 1H63V5L58 9 53 5Z" fill="#4d4d4d" />
            <path d="M58 5V27" stroke="#444" strokeWidth="1.500" />
          </svg>
        </Features>
        <button aria-label="Timeline settings">
          <svg width="14" height="14" viewBox="0 0 14 14"><circle cx="7" cy="7" r="3.900" fill="none" stroke="#979797" strokeWidth="2.600" /><g stroke="#979797" strokeWidth="2.400"><path d="M7 0V2.500M7 11.500V14M0 7H2.500M11.500 7H14M2 2L4 4M10 10L12 12M2 12L4 10M10 4L12 2" /></g></svg>
        </button>
      </Timeline>
      <CommandBar>
        <button aria-label="Expand text commands"><Plus /></button>
        <PanelTitle>TEXT COMMANDS</PanelTitle>
      </CommandBar>
    </Page>
  );
}
